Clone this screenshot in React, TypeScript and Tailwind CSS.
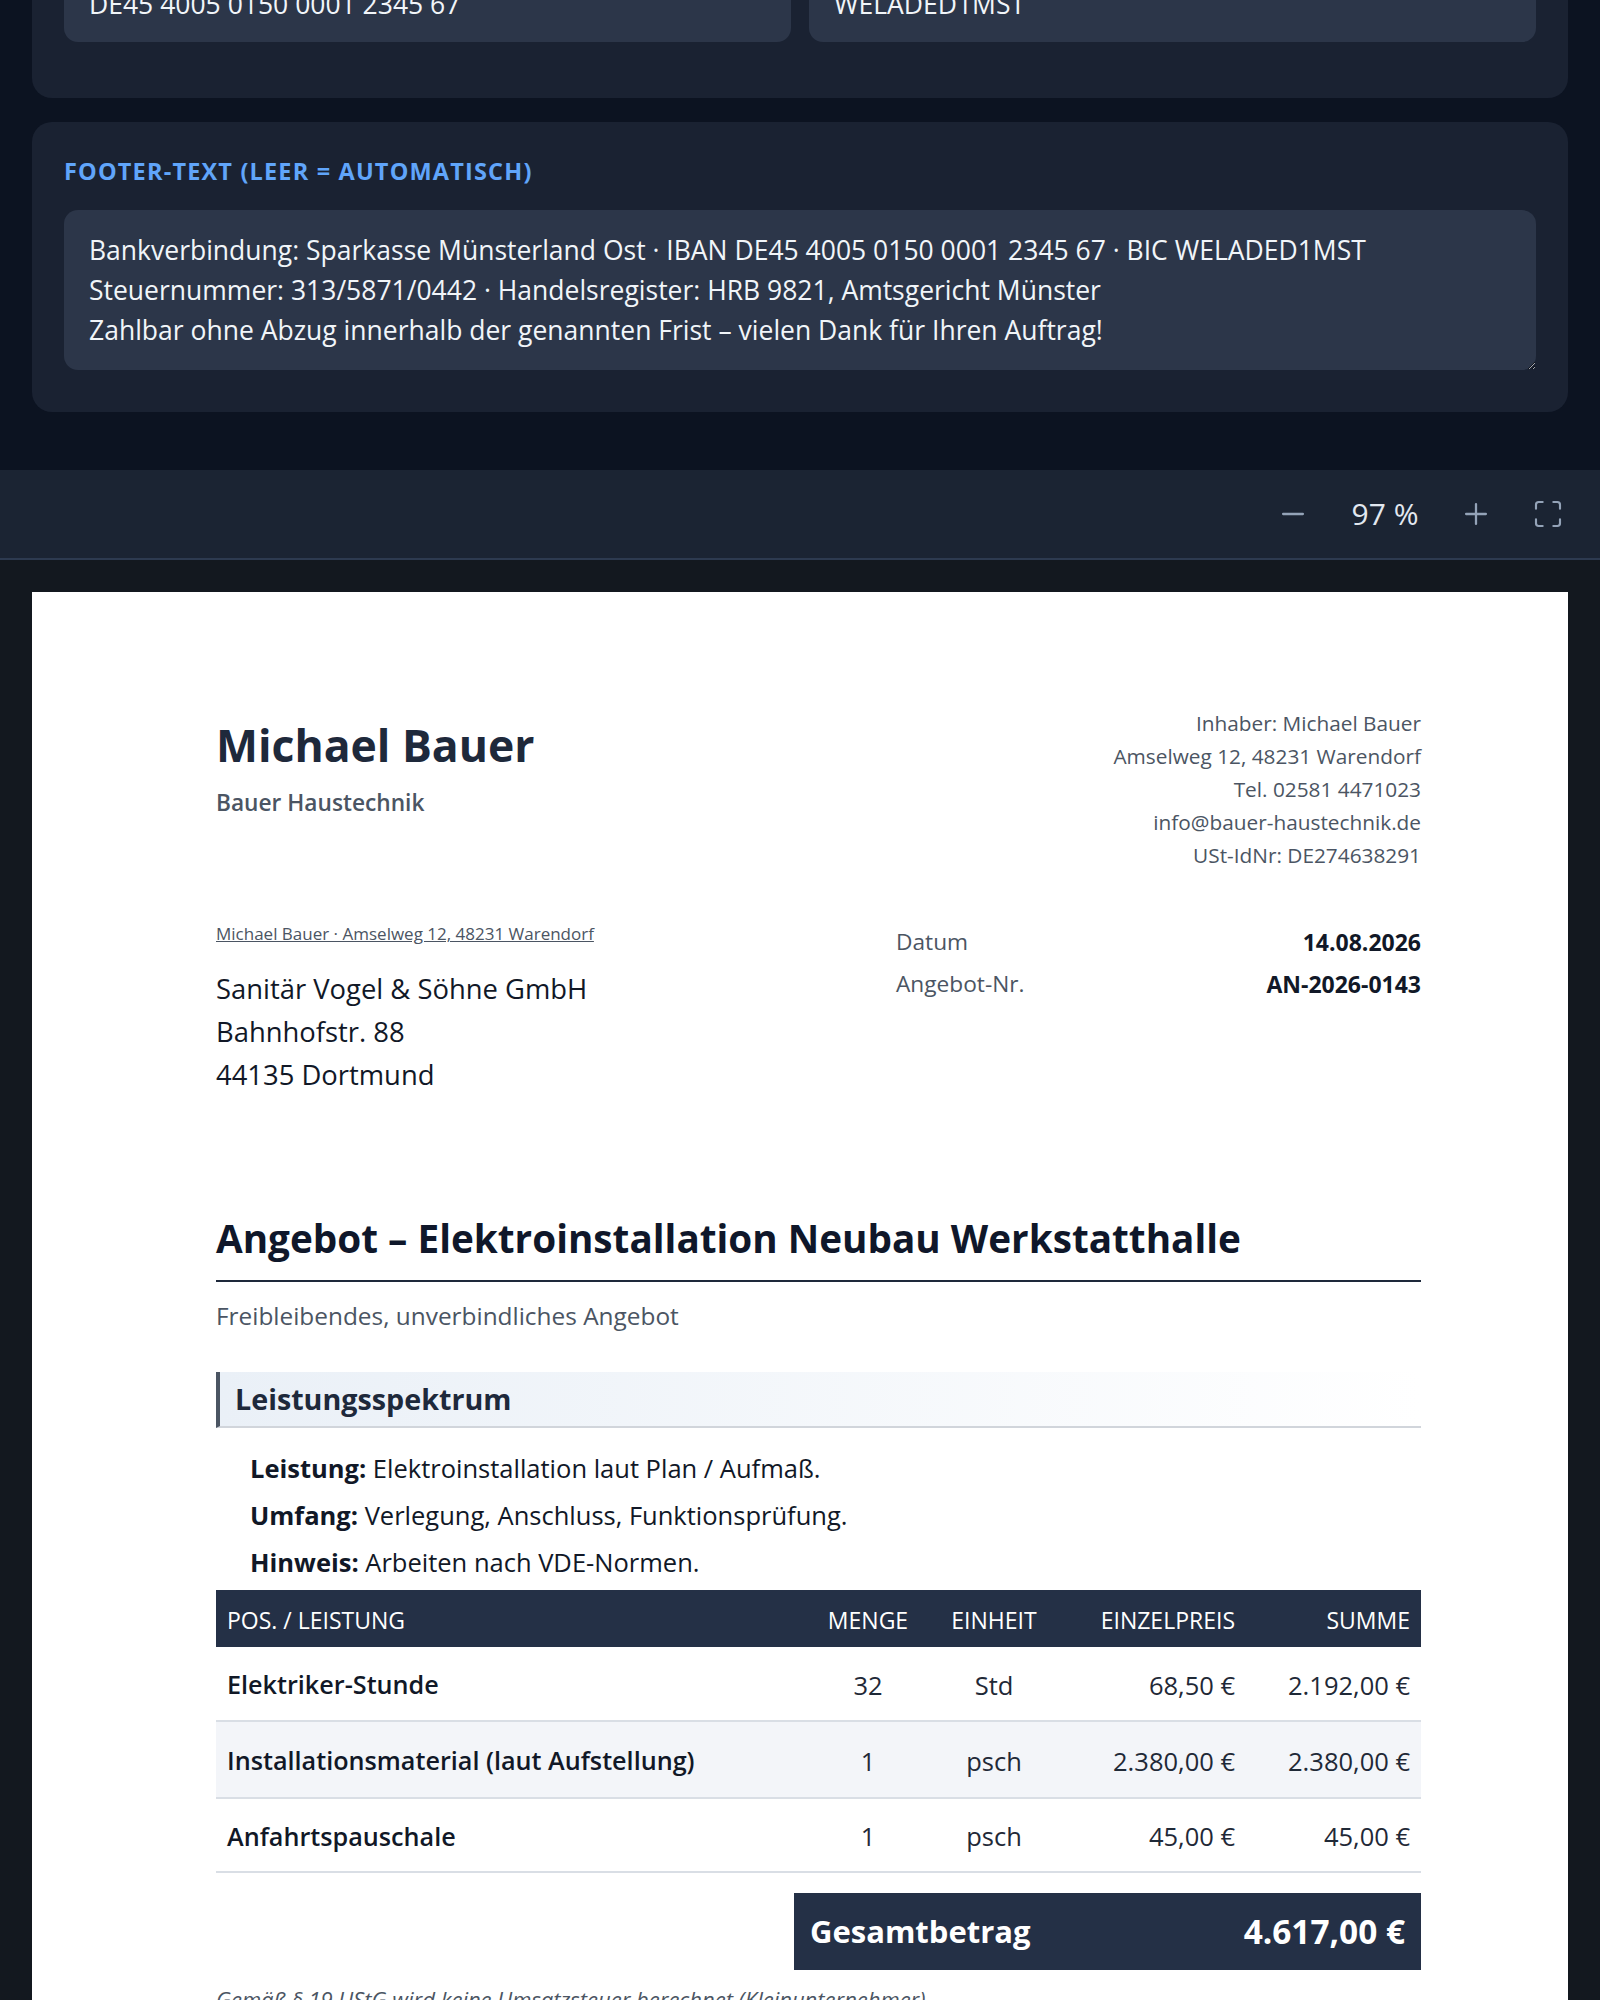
import { Minus, Plus, Maximize } from "lucide-react";

const footerText = [
  "Bankverbindung: Sparkasse Münsterland Ost · IBAN DE45 4005 0150 0001 2345 67 · BIC WELADED1MST",
  "Steuernummer: 313/5871/0442 · Handelsregister: HRB 9821, Amtsgericht Münster",
  "Zahlbar ohne Abzug innerhalb der genannten Frist – vielen Dank für Ihren Auftrag!",
].join("\n");

type Position = {
  name: string;
  qty: string;
  unit: string;
  price: string;
  total: string;
};

const positions: Position[] = [
  { name: "Elektriker-Stunde", qty: "32", unit: "Std", price: "68,50 €", total: "2.192,00 €" },
  { name: "Installationsmaterial (laut Aufstellung)", qty: "1", unit: "psch", price: "2.380,00 €", total: "2.380,00 €" },
  { name: "Anfahrtspauschale", qty: "1", unit: "psch", price: "45,00 €", total: "45,00 €" },
];

const senderLines = [
  "Inhaber: Michael Bauer",
  "Amselweg 12, 48231 Warendorf",
  "Tel. 02581 4471023",
  "info@bauer-haustechnik.de",
  "USt-IdNr: DE274638291",
];

function EditorPanels() {
  return (
    <div className="overflow-hidden px-8 pb-[58px]">
      <div className="-mt-[120px] rounded-[20px] bg-[#1a2232] px-8 pt-[86px] pb-[56px]">
        <div className="grid grid-cols-2 gap-[18px]">
          <div className="rounded-[14px] bg-[#2c3649] px-[25px] py-[18px] text-[26.5px] leading-[40px] text-[#f1f5f9]">
            DE45 4005 0150 0001 2345 67
          </div>
          <div className="rounded-[14px] bg-[#2c3649] px-[25px] py-[18px] text-[26.5px] leading-[40px] text-[#f1f5f9]">
            WELADED1MST
          </div>
        </div>
      </div>

      <div className="mt-6 rounded-[20px] bg-[#1a2232] px-8 pt-[35px] pb-[42px]">
        <label className="mb-[25px] block text-[23.5px] font-bold uppercase leading-[28px] tracking-[0.05em] text-[#60a5fa]">
          Footer-Text (leer = automatisch)
        </label>
        <textarea
          className="block h-[160px] w-full rounded-[14px] bg-[#2c3649] px-[25px] py-[20px] text-[26.5px] leading-[40px] text-[#f1f5f9] outline-none"
          defaultValue={footerText}
        />
      </div>
    </div>
  );
}

function PreviewToolbar() {
  return (
    <div className="flex h-[90px] items-center justify-end border-b-2 border-[#2d3a50] bg-[#1b2433] pr-8">
      <button className="flex h-10 w-10 items-center justify-center text-[#94a3b8]">
        <Minus size={34} strokeWidth={1.6} />
      </button>
      <span className="ml-[38px] w-[68px] text-center text-[30px] leading-none text-[#e2e8f0]">97 %</span>
      <button className="ml-[37px] flex h-10 w-10 items-center justify-center text-[#94a3b8]">
        <Plus size={34} strokeWidth={1.6} />
      </button>
      <button className="ml-[32px] flex h-10 w-10 items-center justify-center text-[#94a3b8]">
        <Maximize size={32} strokeWidth={1.6} />
      </button>
    </div>
  );
}

function OfferDocument() {
  return (
    <div className="bg-white pt-[115px] pr-[147px] pl-[184px] pb-10">
      <div className="flex items-start justify-between">
        <div className="mt-[10px]">
          <h1 className="text-[44.5px] font-bold leading-[56px] text-[#1e293b]">Michael Bauer</h1>
          <p className="mt-[15px] text-[22.7px] font-semibold leading-[30px] text-[#4b5563]">Bauer Haustechnik</p>
        </div>
        <div className="text-right text-[20.8px] leading-[33px] text-[#4b5563]">
          {senderLines.map((line) => (
            <p key={line}>{line}</p>
          ))}
        </div>
      </div>

      <div className="mt-[48px] flex items-start justify-between">
        <div>
          <p className="mt-[3px] text-[17px] leading-[22px] text-[#4b5563] underline">
            Michael Bauer · Amselweg 12, 48231 Warendorf
          </p>
          <div className="mt-[22px] text-[27.4px] leading-[43px] text-[#111827]">
            <p>Sanitär Vogel &amp; Söhne GmbH</p>
            <p>Bahnhofstr. 88</p>
            <p>44135 Dortmund</p>
          </div>
        </div>
        <div className="mt-[1px] w-[525px] text-[22.7px]">
          <div className="flex h-[42px] items-center justify-between">
            <span className="text-[#4b5563]">Datum</span>
            <span className="text-[23px] font-bold text-[#111827]">14.08.2026</span>
          </div>
          <div className="flex h-[42px] items-center justify-between">
            <span className="text-[#4b5563]">Angebot-Nr.</span>
            <span className="text-[23px] font-bold text-[#111827]">AN-2026-0143</span>
          </div>
        </div>
      </div>

      <h2 className="mt-[119px] border-b-2 border-[#1e293b] pb-[18px] text-[38.7px] font-bold leading-[47px] text-[#0f172a]">
        Angebot – Elektroinstallation Neubau Werkstatthalle
      </h2>
      <p className="mt-[19px] text-[24.4px] leading-[30px] text-[#4b5563]">Freibleibendes, unverbindliches Angebot</p>

      <div className="mt-[41px] border-b-2 border-l-4 border-[#d1d5db] border-l-[#4b5563] bg-gradient-to-r from-[#eaf0f7] to-white py-[9px] pl-[15px]">
        <h3 className="text-[28.7px] font-bold leading-[36px] text-[#1e293b]">Leistungsspektrum</h3>
      </div>

      <ul className="mt-[17px] pl-[34px] text-[25.5px] leading-[47px] text-[#111827]">
        <li>
          <strong>Leistung:</strong> Elektroinstallation laut Plan / Aufmaß.
        </li>
        <li>
          <strong>Umfang:</strong> Verlegung, Anschluss, Funktionsprüfung.
        </li>
        <li>
          <strong>Hinweis:</strong> Arbeiten nach VDE-Normen.
        </li>
      </ul>

      <table className="mt-[4px] w-full table-fixed border-collapse">
        <colgroup>
          <col className="w-[602px]" />
          <col className="w-[100px]" />
          <col className="w-[152px]" />
          <col className="w-[176px]" />
          <col className="w-[175px]" />
        </colgroup>
        <thead>
          <tr className="h-[57px] bg-[#243046] text-[23px] uppercase text-white">
            <th className="px-[11px] pt-[3px] text-left font-normal">Pos. / Leistung</th>
            <th className="pt-[3px] text-center font-normal">Menge</th>
            <th className="pt-[3px] text-center font-normal">Einheit</th>
            <th className="px-[11px] pt-[3px] text-right font-normal">Einzelpreis</th>
            <th className="px-[11px] pt-[3px] text-right font-normal">Summe</th>
          </tr>
        </thead>
        <tbody>
          {positions.map((p, i) => (
            <tr
              key={p.name}
              className={`border-b-2 border-[#d9dee5] text-[25.5px] text-[#1f2937] ${i === 1 ? "h-[77px] bg-[#f3f5f9]" : "h-[74px]"}`}
            >
              <td className="px-[11px] pt-[3px] text-[25.2px] font-semibold text-[#111827]">{p.name}</td>
              <td className="pt-[3px] text-center">{p.qty}</td>
              <td className="pt-[3px] text-center">{p.unit}</td>
              <td className="px-[11px] pt-[3px] text-right">{p.price}</td>
              <td className="px-[11px] pt-[3px] text-right">{p.total}</td>
            </tr>
          ))}
        </tbody>
      </table>

      <div className="mt-[20px] ml-auto flex h-[77px] w-[627px] items-center justify-between bg-[#243046] px-4 font-bold text-white">
        <span className="text-[31px]">Gesamtbetrag</span>
        <span className="text-[33.4px]">4.617,00 €</span>
      </div>

      <p className="mt-[14px] text-[22px] italic leading-[30px] text-[#4b5563]">
        Gemäß § 19 UStG wird keine Umsatzsteuer berechnet (Kleinunternehmer).
      </p>
    </div>
  );
}

export default function App() {
  return (
    <div className="min-h-screen bg-[#0c1321] font-['Open_Sans',sans-serif]">
      <EditorPanels />
      <PreviewToolbar />
      <div className="bg-[#13181f] px-8 pt-8">
        <OfferDocument />
      </div>
    </div>
  );
}
